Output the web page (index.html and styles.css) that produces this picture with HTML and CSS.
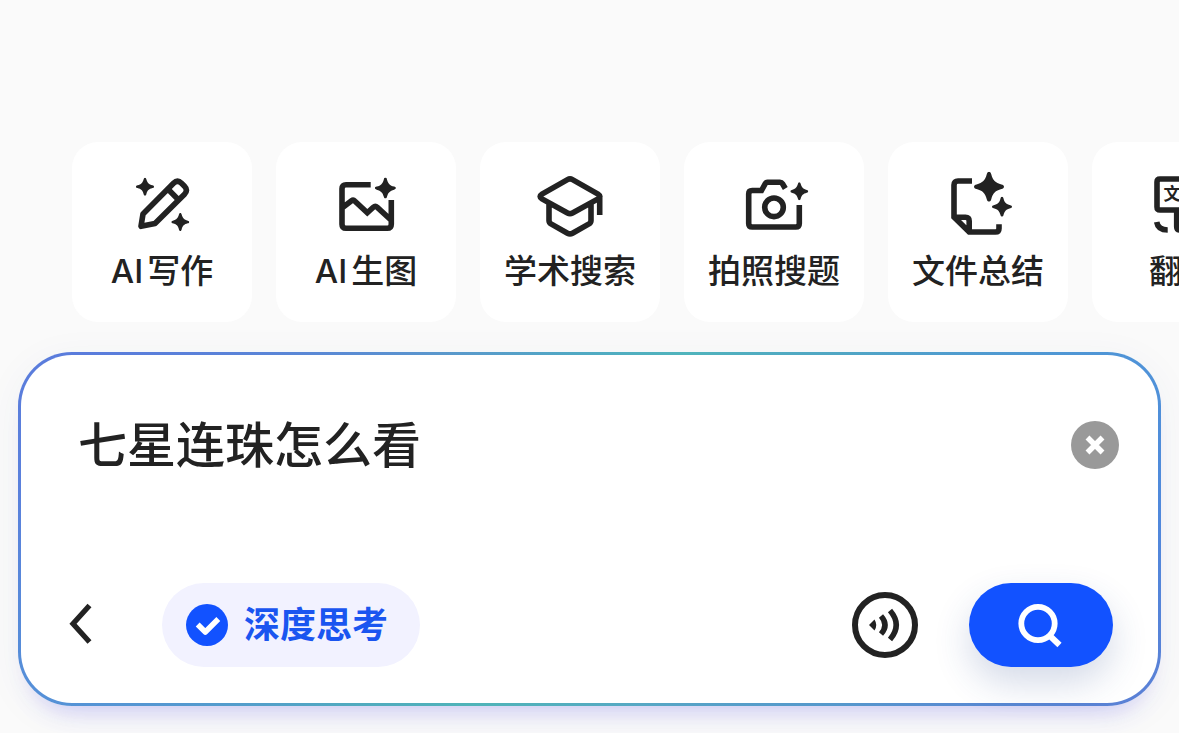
FILE: index.html
```html
<!DOCTYPE html>
<html lang="zh-CN">
<head>
<meta charset="utf-8">
<meta name="viewport" content="width=device-width, initial-scale=1">
<title>AI 搜索</title>
<link rel="stylesheet" href="styles.css">
</head>
<body>
<svg class="sprite" aria-hidden="true">
  <symbol id="spark" viewBox="-10 -10 20 20"><path d="M0-10C.9-10 1.200-9.300 1.500-8.300C2.600-4.200 4.200-2.600 8.300-1.500C9.300-1.200 10-.9 10 0C10 .9 9.300 1.200 8.300 1.500C4.200 2.600 2.600 4.200 1.500 8.300C1.200 9.300.9 10 0 10C-.9 10-1.200 9.300-1.500 8.300C-2.600 4.200-4.200 2.600-8.300 1.500C-9.300 1.200-10 .9-10 0C-10-.9-9.300-1.200-8.300-1.500C-4.200-2.600-2.600-4.200-1.500-8.300C-1.200-9.300-.9-10 0-10Z"/></symbol>
</svg>
<main class="page">
  <nav class="tools" aria-label="快捷工具">
    <button class="tool" type="button">
      <svg class="tool-icon" viewBox="0 0 72 72" aria-hidden="true">
        <path class="line round" d="M15 58.300L17 46L47.500 15.300Q51.500 11.300 55.500 15.300L58.500 18.300Q62.500 22.300 58.500 26.300L29 55.500ZM42.300 21.500L51.700 31"/>
        <use href="#spark" x="10" y="9.700" width="18" height="18"/>
        <use href="#spark" x="45.300" y="45" width="18" height="18"/>
      </svg>
      <span class="tool-label">AI<span class="cjk">写作</span></span>
    </button>
    <button class="tool" type="button">
      <svg class="tool-icon" viewBox="0 0 72 72" aria-hidden="true">
        <path class="line" d="M40.700 16.700H16Q12 16.700 12 20.700V56.300Q12 60.300 16 60.300H57.300Q61.300 60.300 61.300 56.300V32M12 40L21.500 32.800Q23.300 31.500 25 33.200L37.300 44.800L43.300 39.300Q45.300 37.500 47.300 39.300L61 52"/>
        <use href="#spark" x="44.900" y="9.600" width="21" height="21"/>
      </svg>
      <span class="tool-label">AI<span class="cjk">生图</span></span>
    </button>
    <button class="tool" type="button">
      <svg class="tool-icon" viewBox="0 0 72 72" aria-hidden="true">
        <path class="line" d="M33.500 11.600Q36 10.200 38.500 11.600L64 26.100Q67.800 28.500 64 30.900L38.500 45Q36 46.400 33.500 45L8 30.900Q4.200 28.500 8 26.100ZM15 34.500V52.500Q15 54.700 17 55.900L33.500 65.200Q36 66.600 38.500 65.200L55 55.900Q57 54.700 57 52.500V34.500M65.700 29V47"/>
      </svg>
      <span class="tool-label">学术搜索</span>
    </button>
    <button class="tool" type="button">
      <svg class="tool-icon" viewBox="0 0 72 72" aria-hidden="true">
        <path class="line" d="M47.300 20.500L44.500 15.800Q43.600 14.300 42 14.300H29.500Q28 14.300 27.200 15.800L23.500 22.500H14.200Q10.700 22.500 10.700 26V55.500Q10.700 59 14.200 59H57.800Q61.300 59 61.300 55.500V37"/>
        <circle class="line" cx="36" cy="39.300" r="9.300"/>
        <use href="#spark" x="52.300" y="14.300" width="18" height="18"/>
      </svg>
      <span class="tool-label">拍照搜题</span>
    </button>
    <button class="tool" type="button">
      <svg class="tool-icon" viewBox="0 0 72 72" aria-hidden="true">
        <path class="line" d="M30 13H16Q12 13 12 17V49L27.200 64H53.500Q57 64 57 60.500V56.300M12 49.300H23.500Q27.200 49.300 27.200 53V64"/>
        <use href="#spark" x="32" y="3.700" width="30" height="30"/>
        <use href="#spark" x="50" y="28.700" width="20" height="20"/>
      </svg>
      <span class="tool-label">文件总结</span>
    </button>
    <button class="tool" type="button">
      <svg class="tool-icon" viewBox="0 0 72 72" aria-hidden="true">
        <path class="line" d="M14 11H39Q42 11 42 14V39Q42 42 39 42H14Q11 42 11 39V14Q11 11 14 11ZM30.700 42V58.500Q30.700 62 34.200 62H58Q61 62 61 59V34Q61 31 58 31H42M10.700 54Q12 62 21.700 62"/>
        <text class="glyph" x="26" y="32" text-anchor="middle">文</text>
      </svg>
      <span class="tool-label">翻译</span>
    </button>
  </nav>

  <form class="composer">
    <div class="query-row">
      <input class="query" type="text" value="七星连珠怎么看" aria-label="搜索内容">
      <button class="clear" type="button" aria-label="清除">
        <svg viewBox="0 0 48 48" aria-hidden="true"><circle cx="24" cy="24" r="24" fill="#999"/><path d="M16.500 16.500L31.500 31.500M31.500 16.500L16.500 31.500" stroke="#fff" stroke-width="5.500"/></svg>
      </button>
    </div>
    <div class="action-row">
      <button class="back" type="button" aria-label="返回">
        <svg viewBox="0 0 30 48" aria-hidden="true"><path d="M23.500 4.500L7 22.700L23.500 41" fill="none" stroke="#222" stroke-width="5.300"/></svg>
      </button>
      <button class="think" type="button" aria-pressed="true">
        <svg viewBox="0 0 42 42" aria-hidden="true"><circle cx="21" cy="21" r="21" fill="#1252ff"/><path d="M11.700 20.500L19.300 28L32.300 15" fill="none" stroke="#fff" stroke-width="5.500" stroke-linejoin="round"/></svg>
        <span>深度思考</span>
      </button>
      <button class="voice" type="button" aria-label="语音">
        <svg viewBox="0 0 66 66" aria-hidden="true"><circle cx="33" cy="33" r="30" fill="none" stroke="#222" stroke-width="6"/><path d="M17 33L22.500 27.500Q26 33 22.500 38.500Z" fill="#222"/><path d="M29 24Q37 33 29 42M38 18.500Q50.500 33 38 47.500" fill="none" stroke="#222" stroke-width="5.500"/></svg>
      </button>
      <button class="submit" type="submit" aria-label="搜索">
        <svg viewBox="0 0 48 48" aria-hidden="true"><circle cx="21" cy="22.500" r="16.700" fill="none" stroke="#fff" stroke-width="5.800"/><path d="M32 34L42.500 44" stroke="#fff" stroke-width="6"/></svg>
      </button>
    </div>
  </form>
</main>
</body>
</html>
```
FILE: styles.css
```css
* {
  box-sizing: border-box;
}

body {
  margin: 0;
  background: #fafafa;
  color: #222;
  font-family: Inter, "Noto Sans CJK SC", sans-serif;
  font-weight: 500;
}

button,
input {
  margin: 0;
  padding: 0;
  border: 0;
  background: none;
  color: inherit;
  font: inherit;
}

button {
  flex: none;
  cursor: pointer;
}

svg {
  display: block;
}

.sprite {
  position: absolute;
  width: 0;
  height: 0;
}

.page {
  padding: 142px 0 27px;
  overflow: hidden;
}

.tools {
  display: flex;
  gap: 24px;
  padding-left: 72px;
  overflow: hidden;
}

.tool {
  display: flex;
  flex-direction: column;
  align-items: center;
  gap: 9px;
  width: 180px;
  padding: 26px 0 29px;
  border-radius: 26px;
  background: #fff;
}

.tool-icon {
  width: 72px;
  height: 72px;
  fill: #222;
}

.line {
  fill: none;
  stroke: #222;
  stroke-width: 5.6;
}

.round {
  stroke-linejoin: round;
}

.glyph {
  font-family: "Noto Sans CJK SC", sans-serif;
  font-size: 17px;
  font-weight: 700;
}

.tool-label {
  font-size: 33px;
  line-height: 44px;
  white-space: nowrap;
}

.cjk {
  margin-left: 4px;
}

.composer {
  margin: 30px 18px 0;
  padding: 54px 0 36px;
  border: 3px solid transparent;
  border-radius: 54px;
  background:
    linear-gradient(#fff, #fff) padding-box,
    conic-gradient(from 29deg, #50b4bc, #50a6c4 26deg, #4f93d8 44deg, #5088dc 60deg, #5a80d6 78deg, #5598cc 96deg, #56a8c4 135deg, #4fb4b8 185deg, #50aabf 205deg, #5590d8 224deg, #5a80dc 245deg, #5a7cdc 260deg, #5a98cc 291deg, #50a8c4 325deg, #50b4bc) border-box;
  box-shadow:
    0 20px 24px -16px rgba(90, 80, 240, 0.28),
    0 8px 40px rgba(60, 80, 140, 0.05);
}

.query-row {
  display: flex;
  align-items: center;
  padding: 0 39px 0 57px;
}

.query {
  flex: 1;
  min-width: 0;
  height: 72px;
  padding-bottom: 8px;
  outline: 0;
  font-size: 49px;
}

.clear {
  width: 48px;
  height: 48px;
}

.action-row {
  display: flex;
  align-items: center;
  margin-top: 102px;
  padding: 0 45px;
}

.back {
  width: 30px;
  height: 48px;
}

.think {
  display: flex;
  align-items: center;
  gap: 16px;
  height: 84px;
  margin-left: 66px;
  padding: 0 32px 0 24px;
  border-radius: 42px;
  background: #f2f2ff;
  color: #1a55f0;
  font-size: 36px;
  font-weight: 700;
  line-height: 48px;
}

.think svg {
  width: 42px;
  height: 42px;
}

.voice {
  width: 66px;
  height: 66px;
  margin-left: auto;
}

.submit {
  display: flex;
  align-items: center;
  justify-content: center;
  width: 144px;
  height: 84px;
  margin-left: 51px;
  border-radius: 42px;
  background: #1252ff;
  box-shadow: 0 16px 36px rgba(40, 70, 140, 0.2);
}

.submit svg {
  width: 48px;
  height: 48px;
}
```
